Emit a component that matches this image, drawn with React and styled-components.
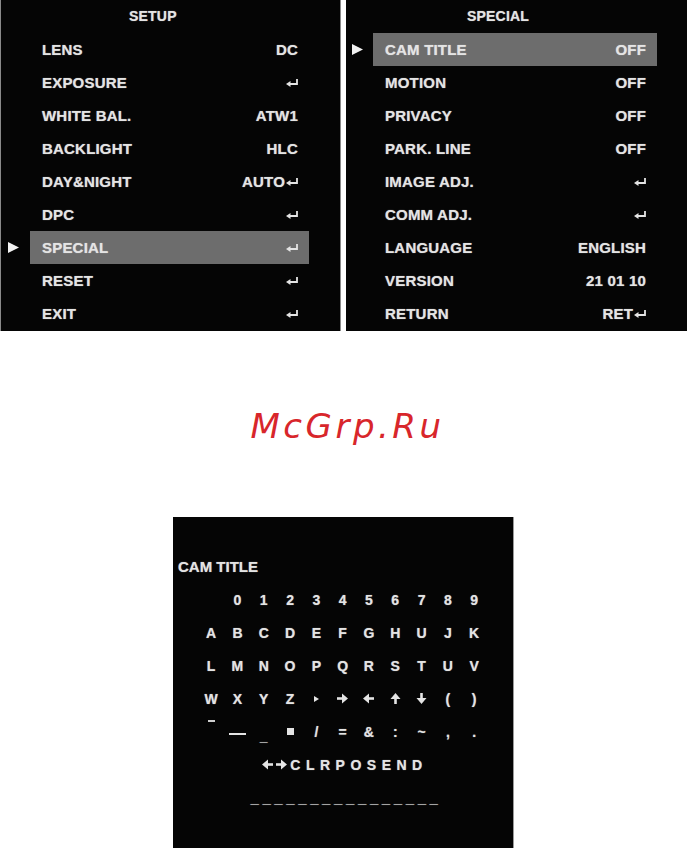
import React from "react"
import styled, { createGlobalStyle } from "styled-components"

const GlobalStyle = createGlobalStyle`
  html, body {
    margin: 0;
    padding: 0;
    background: #fff;
  }
  body {
    font-family: "Liberation Sans", Arial, sans-serif;
  }
`

const Page = styled.div`
  width: 687px;
  height: 848px;
  overflow: hidden;
  background: #fff;
`

const TopRow = styled.div`
  display: flex;
  gap: 5px;
`

const Panel = styled.div`
  width: ${(p) => p.$width}px;
  height: 331px;
  background: #050505;
  color: #e4e4e4;
  font-weight: 700;
  font-size: 15px;
  letter-spacing: 0.2px;
  box-sizing: border-box;
  border-left: ${(p) => (p.$edge ? "1px solid #8a8a8a" : "none")};
  border-right: ${(p) => (p.$edge ? "1px solid #8a8a8a" : "none")};
  text-shadow: 0 0 1px rgba(255, 255, 255, 0.6);
`

const Title = styled.div`
  height: 33px;
  line-height: 33px;
  padding-left: ${(p) => p.$indent}px;
  font-size: 14px;
`

const Row = styled.div`
  display: flex;
  height: 33px;
`

const Marker = styled.div`
  width: ${(p) => p.$width}px;
  display: flex;
  align-items: center;
  justify-content: center;
  padding-right: 4px;
  box-sizing: border-box;
`

const Bar = styled.div`
  width: ${(p) => p.$width}px;
  display: flex;
  align-items: center;
  justify-content: space-between;
  padding: 0 11px 0 12px;
  box-sizing: border-box;
  background: ${(p) => (p.$active ? "#6d6d6d" : "transparent")};
`

const Value = styled.span`
  display: flex;
  align-items: center;
`

const Watermark = styled.div`
  height: 186px;
  display: flex;
  align-items: center;
  justify-content: center;
  padding: 4px 0 0 8px;
  box-sizing: border-box;
  font-family: "DejaVu Sans", sans-serif;
  font-style: oblique;
  font-size: 34px;
  letter-spacing: 3.5px;
  color: #d8262b;
`

const TitlePanel = styled.div`
  margin-left: 173px;
  width: 341px;
  height: 331px;
  background: #050505;
  color: #e4e4e4;
  font-weight: 700;
  border-right: 1px solid #9a9a9a;
  box-sizing: border-box;
  padding-top: 33px;
  text-shadow: 0 0 1px rgba(255, 255, 255, 0.6);
`

const TitleLabel = styled.div`
  height: 33px;
  line-height: 33px;
  padding-left: 5px;
  font-size: 15px;
`

const CharGrid = styled.div`
  display: grid;
  grid-template-columns: repeat(11, 26.3px);
  grid-auto-rows: 33px;
  padding-left: 25px;
  font-size: 14px;
`

const Cell = styled.div`
  display: flex;
  align-items: ${(p) => p.$align || "center"};
  justify-content: center;
  padding-top: ${(p) => p.$shift || 0}px;
  box-sizing: border-box;
`

const CommandRow = styled.div`
  height: 33px;
  display: flex;
  align-items: center;
  justify-content: center;
  gap: 3px;
  font-size: 14px;
  letter-spacing: 5.5px;
  padding-left: 4px;
`

const Dashes = styled.div`
  height: 40px;
  display: flex;
  align-items: flex-start;
  justify-content: center;
  padding: 9px 0 0 6px;
  box-sizing: border-box;
  font-size: 15px;
  letter-spacing: 3.6px;
  line-height: 1;
`

const Square = styled.span`
  width: 7px;
  height: 7px;
  background: #e4e4e4;
`

const WideDash = styled.span`
  width: 17px;
  height: 2px;
  background: #e4e4e4;
  margin-top: 4px;
`

const Macron = styled.span`
  width: 7px;
  height: 2px;
  background: #cfcfcf;
  margin-top: 5px;
`

function Enter() {
  return (
    <svg width="12" height="9" viewBox="0 0 12 9" style={{ marginLeft: 1 }}>
      <path d="M11 1 V6 H4" stroke="#e4e4e4" strokeWidth="1.8" fill="none" />
      <polygon points="0,6 4.5,3 4.5,9" fill="#e4e4e4" />
    </svg>
  )
}

function Pointer() {
  return (
    <svg width="11" height="11" viewBox="0 0 11 11">
      <polygon points="0,0 11,5.5 0,11" fill="#f2f2f2" />
    </svg>
  )
}

function Arrow({ dir }) {
  const rot = { right: 0, down: 90, left: 180, up: 270 }[dir]
  return (
    <svg width="11" height="11" viewBox="0 0 11 11" style={{ transform: `rotate(${rot}deg)` }}>
      <rect x="0" y="4.2" width="6" height="2.6" fill="#e4e4e4" />
      <polygon points="5,0.5 11,5.5 5,10.5" fill="#e4e4e4" />
    </svg>
  )
}

function SmallTriangle() {
  return (
    <svg width="5" height="6" viewBox="0 0 5 6">
      <polygon points="0,0 5,3 0,6" fill="#e4e4e4" />
    </svg>
  )
}

const setupRows = [
  ["LENS", "DC"],
  ["EXPOSURE", "enter"],
  ["WHITE BAL.", "ATW1"],
  ["BACKLIGHT", "HLC"],
  ["DAY&NIGHT", "AUTO+"],
  ["DPC", "enter"],
  ["SPECIAL", "enter"],
  ["RESET", "enter"],
  ["EXIT", "enter"],
]

const specialRows = [
  ["CAM TITLE", "OFF"],
  ["MOTION", "OFF"],
  ["PRIVACY", "OFF"],
  ["PARK. LINE", "OFF"],
  ["IMAGE ADJ.", "enter"],
  ["COMM ADJ.", "enter"],
  ["LANGUAGE", "ENGLISH"],
  ["VERSION", "21 01 10"],
  ["RETURN", "RET+"],
]

function renderValue(v) {
  if (v === "enter") return <Enter />
  if (v.endsWith("+")) {
    return (
      <>
        {v.slice(0, -1)}
        <Enter />
      </>
    )
  }
  return v
}

function Menu({ title, titleIndent, rows, active, width, marker, bar, edge }) {
  return (
    <Panel $width={width} $edge={edge}>
      <Title $indent={titleIndent}>{title}</Title>
      {rows.map(([label, value], i) => (
        <Row key={label}>
          <Marker $width={marker}>{active === i && <Pointer />}</Marker>
          <Bar $width={bar} $active={active === i}>
            <span>{label}</span>
            <Value>{renderValue(value)}</Value>
          </Bar>
        </Row>
      ))}
    </Panel>
  )
}

const digits = ["0", "1", "2", "3", "4", "5", "6", "7", "8", "9"]
const letters1 = "ABCDEFGHUJK".split("")
const letters2 = "LMNOPQRSTUV".split("")

export default function App() {
  return (
    <Page>
      <GlobalStyle />
      <TopRow>
        <Menu
          title="SETUP"
          titleIndent={128}
          rows={setupRows}
          active={6}
          width={341}
          marker={29}
          bar={279}
          edge
        />
        <Menu
          title="SPECIAL"
          titleIndent={121}
          rows={specialRows}
          active={0}
          width={341}
          marker={27}
          bar={284}
        />
      </TopRow>
      <Watermark>McGrp.Ru</Watermark>
      <TitlePanel>
        <TitleLabel>CAM TITLE</TitleLabel>
        <CharGrid>
          <Cell />
          {digits.map((d) => (
            <Cell key={d}>{d}</Cell>
          ))}
          {letters1.map((c) => (
            <Cell key={c}>{c}</Cell>
          ))}
          {letters2.map((c) => (
            <Cell key={c + "2"}>{c}</Cell>
          ))}
          <Cell>W</Cell>
          <Cell>X</Cell>
          <Cell>Y</Cell>
          <Cell>Z</Cell>
          <Cell><SmallTriangle /></Cell>
          <Cell><Arrow dir="right" /></Cell>
          <Cell><Arrow dir="left" /></Cell>
          <Cell><Arrow dir="up" /></Cell>
          <Cell><Arrow dir="down" /></Cell>
          <Cell>(</Cell>
          <Cell>)</Cell>
          <Cell $align="flex-start"><Macron /></Cell>
          <Cell><WideDash /></Cell>
          <Cell $shift={8}>_</Cell>
          <Cell><Square /></Cell>
          <Cell>/</Cell>
          <Cell>=</Cell>
          <Cell>&amp;</Cell>
          <Cell>:</Cell>
          <Cell>~</Cell>
          <Cell>,</Cell>
          <Cell>.</Cell>
        </CharGrid>
        <CommandRow>
          <Arrow dir="left" />
          <Arrow dir="right" />
          <span>CLRPOSEND</span>
        </CommandRow>
        <Dashes>________________</Dashes>
      </TitlePanel>
    </Page>
  )
}
